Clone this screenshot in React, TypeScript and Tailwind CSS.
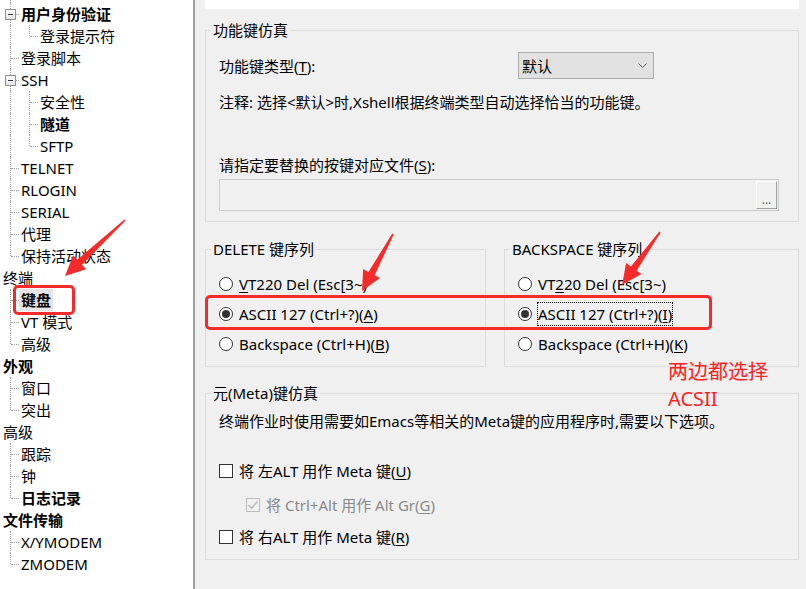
import React from "react";

type Kind = "pipe" | "tee" | "ell" | "box" | "none";

const dot = "border-dotted border-[#a0a0a0]";

function Cell({ kind }: { kind: Kind }) {
  return (
    <div className="relative h-[22px] w-[19px] shrink-0">
      {(kind === "pipe" || kind === "tee") && (
        <div className={`absolute left-[10px] top-0 h-[22px] border-l ${dot}`} />
      )}
      {kind === "ell" && <div className={`absolute left-[10px] top-0 h-[11px] border-l ${dot}`} />}
      {(kind === "tee" || kind === "ell") && (
        <div className={`absolute left-[11px] top-[11px] w-[8px] border-t ${dot}`} />
      )}
      {kind === "box" && (
        <>
          <div className={`absolute left-[10px] top-0 h-[6px] border-l ${dot}`} />
          <div className={`absolute left-[10px] top-[16px] h-[6px] border-l ${dot}`} />
          <div className={`absolute left-[16px] top-[11px] w-[3px] border-t ${dot}`} />
          <div className="absolute left-[5px] top-[6px] flex h-[11px] w-[11px] items-center justify-center border border-[#919191] bg-gradient-to-b from-white to-[#e4e4e4]">
            <div className="h-px w-[5px] bg-[#303a4c]" />
          </div>
        </>
      )}
    </div>
  );
}

type Row = { cells: Kind[]; label: string; bold?: boolean; sel?: boolean };

const rows: Row[] = [
  { cells: ["box"], label: "用户身份验证", bold: true },
  { cells: ["pipe", "ell"], label: "登录提示符" },
  { cells: ["tee"], label: "登录脚本" },
  { cells: ["box"], label: "SSH" },
  { cells: ["pipe", "tee"], label: "安全性" },
  { cells: ["pipe", "tee"], label: "隧道", bold: true },
  { cells: ["pipe", "ell"], label: "SFTP" },
  { cells: ["tee"], label: "TELNET" },
  { cells: ["tee"], label: "RLOGIN" },
  { cells: ["tee"], label: "SERIAL" },
  { cells: ["tee"], label: "代理" },
  { cells: ["ell"], label: "保持活动状态" },
  { cells: [], label: "终端" },
  { cells: ["tee"], label: "键盘", bold: true, sel: true },
  { cells: ["tee"], label: "VT 模式" },
  { cells: ["ell"], label: "高级" },
  { cells: [], label: "外观", bold: true },
  { cells: ["tee"], label: "窗口" },
  { cells: ["ell"], label: "突出" },
  { cells: [], label: "高级" },
  { cells: ["tee"], label: "跟踪" },
  { cells: ["tee"], label: "钟" },
  { cells: ["ell"], label: "日志记录", bold: true },
  { cells: [], label: "文件传输", bold: true },
  { cells: ["tee"], label: "X/YMODEM" },
  { cells: ["ell"], label: "ZMODEM" },
];

function U({ children }: { children: React.ReactNode }) {
  return <span className="underline decoration-1 underline-offset-[2px]">{children}</span>;
}

function Radio({ checked }: { checked?: boolean }) {
  return (
    <div className="flex h-[14px] w-[14px] shrink-0 items-center justify-center rounded-full border border-[#333333] bg-white">
      {checked && <div className="h-[8px] w-[8px] rounded-full bg-[#333333]" />}
    </div>
  );
}

function Check({ disabled, checked }: { disabled?: boolean; checked?: boolean }) {
  return (
    <div
      className={`flex h-[14px] w-[14px] shrink-0 items-center justify-center border ${
        disabled ? "border-[#bcbcbc] bg-[#f0f0f0]" : "border-[#333333] bg-white"
      }`}
    >
      {checked && (
        <svg width="12" height="12" viewBox="0 0 12 12">
          <path d="M1.5 6 L4.6 9 L10.5 2.5" fill="none" stroke="#bcbcbc" strokeWidth="1.6" />
        </svg>
      )}
    </div>
  );
}

function arrow(L: number) {
  const h = 20;
  return `0,-0.8 ${L - h},-3.5 ${L - h},-9.5 ${L},0 ${L - h},9.5 ${L - h},3.5 0,0.8`;
}

export default function App() {
  return (
    <div className="relative flex h-[589px] w-[806px] overflow-hidden bg-[#f0f0f0] font-['Noto_Sans','Noto_Sans_CJK_SC',sans-serif] text-[15px] leading-[22px] text-black">
      {/* Tree */}
      <div className="w-[195px] shrink-0 border-r-2 border-[#a0a0a0] bg-white">
        <div className="relative h-[3px]">
          <div className={`absolute left-[10px] top-0 h-[3px] border-l ${dot}`} />
        </div>
        {rows.map((r, i) => (
          <div key={i} className="flex h-[22px] items-center">
            {r.cells.length === 0 && <div className="w-px shrink-0" />}
            {r.cells.map((c, j) => (
              <Cell key={j} kind={c} />
            ))}
            <span
              className={`h-[22px] whitespace-nowrap px-[2px] leading-[22px] ${r.bold ? "font-bold" : ""} ${
                r.sel ? "bg-[#e5e5e5]" : ""
              }`}
            >
              {r.label}
            </span>
          </div>
        ))}
      </div>

      {/* Right panel */}
      <div className="flex min-w-0 flex-1 flex-col pl-[10px] pr-[7px]">
        <div className="h-[9px] bg-white" />

        <fieldset className="mt-[10px] min-w-0 border border-[#dcdcdc]">
          <legend className="ml-[5px] px-[2px] leading-[22px]">功能键仿真</legend>
          <div className="pb-[10px] pl-[13px] pr-[19px]">
            <div className="mt-[11px] flex h-[27px] items-center">
              <span className="w-[299px]">
                功能键类型(<U>T</U>):
              </span>
              <div className="flex h-[27px] w-[136px] items-center justify-between border border-[#adadad] bg-[#e1e1e1] pl-[3px] pr-[6px]">
                <span>默认</span>
                <svg width="9" height="5" viewBox="0 0 9 5">
                  <path d="M0.5 0.5 L4.5 4.5 L8.5 0.5" fill="none" stroke="#5a5a5a" strokeWidth="1" />
                </svg>
              </div>
            </div>
            <div className="mt-[12px]">注释: 选择&lt;默认&gt;时,Xshell根据终端类型自动选择恰当的功能键。</div>
            <div className="mt-[41px]">
              请指定要替换的按键对应文件(<U>S</U>):
            </div>
            <div className="mt-[3px] flex h-[32px] items-stretch border border-[#cccccc] bg-[#f0f0f0] p-px">
              <div className="flex-1" />
              <div className="flex w-[21px] items-end justify-center border-b border-r border-l border-t border-b-[#a0a0a0] border-l-white border-r-[#a0a0a0] border-t-white pb-[2px] text-[12px] leading-[12px] text-[#606060]">
                ...
              </div>
            </div>
          </div>
        </fieldset>

        <div className="mt-[16px] flex gap-[18px]">
          <fieldset className="w-[281px] min-w-0 border border-[#dcdcdc]">
            <legend className="ml-[5px] px-[2px] leading-[22px]">DELETE 键序列</legend>
            <div className="pb-[7px] pl-[13px] pt-[9px]">
              <div className="flex h-[30px] items-center gap-[6px]">
                <Radio />
                <span>
                  <U>V</U>T220 Del (Esc[3~)
                </span>
              </div>
              <div className="flex h-[30px] items-center gap-[6px]">
                <Radio checked />
                <span>
                  ASCII 127 (Ctrl+?)(<U>A</U>)
                </span>
              </div>
              <div className="flex h-[30px] items-center gap-[6px]">
                <Radio />
                <span>
                  Backspace (Ctrl+H)(<U>B</U>)
                </span>
              </div>
            </div>
          </fieldset>
          <fieldset className="min-w-0 flex-1 border border-[#dcdcdc]">
            <legend className="ml-[5px] px-[2px] leading-[22px]">BACKSPACE 键序列</legend>
            <div className="pb-[7px] pl-[13px] pt-[9px]">
              <div className="flex h-[30px] items-center gap-[6px]">
                <Radio />
                <span>
                  VT<U>2</U>20 Del (Esc[3~)
                </span>
              </div>
              <div className="flex h-[30px] items-center gap-[6px]">
                <Radio checked />
                <span className="outline-1 outline-dotted outline-black">
                  ASCII 127 (Ctrl+?)(<U>I</U>)
                </span>
              </div>
              <div className="flex h-[30px] items-center gap-[6px]">
                <Radio />
                <span>
                  Backspace (Ctrl+H)(<U>K</U>)
                </span>
              </div>
            </div>
          </fieldset>
        </div>

        <fieldset className="mt-[15px] min-w-0 border border-[#dcdcdc]">
          <legend className="ml-[5px] px-[2px] leading-[22px]">元(Meta)键仿真</legend>
          <div className="pb-[11px] pl-[13px]">
            <div className="mt-[6px]">终端作业时使用需要如Emacs等相关的Meta键的应用程序时,需要以下选项。</div>
            <div className="mt-[28px] flex h-[22px] items-center gap-[6px]">
              <Check />
              <span>
                将 左ALT 用作 Meta 键(<U>U</U>)
              </span>
            </div>
            <div className="ml-[27px] mt-[12px] flex h-[22px] items-center gap-[6px] text-[#8a8a8a]">
              <Check disabled checked />
              <span>
                将 Ctrl+Alt 用作 Alt Gr(<U>G</U>)
              </span>
            </div>
            <div className="mt-[10px] flex h-[22px] items-center gap-[6px]">
              <Check />
              <span>
                将 右ALT 用作 Meta 键(<U>R</U>)
              </span>
            </div>
          </div>
        </fieldset>
      </div>

      {/* Red annotations (overlay) */}
      <div className="pointer-events-none absolute left-[13px] top-[285px] h-[30px] w-[62px] rounded-[5px] border-[3px] border-[#f52a2a]" />
      <div className="pointer-events-none absolute left-[205px] top-[295px] h-[35px] w-[507px] rounded-[5px] border-[3px] border-[#f52a2a]" />
      <div className="pointer-events-none absolute left-[668px] top-[358px] text-[20px] leading-[27px] text-[#ff2020]">
        两边都选择
        <br />
        ACSII
      </div>
      <svg className="pointer-events-none absolute left-0 top-0" width="806" height="589">
        <polygon points={arrow(82)} fill="#f52a2a" transform="translate(125 220) rotate(137)" />
        <polygon points={arrow(65)} fill="#f52a2a" transform="translate(393 234) rotate(118.5)" />
        <polygon points={arrow(65)} fill="#f52a2a" transform="translate(660 232) rotate(125.6)" />
      </svg>
    </div>
  );
}
